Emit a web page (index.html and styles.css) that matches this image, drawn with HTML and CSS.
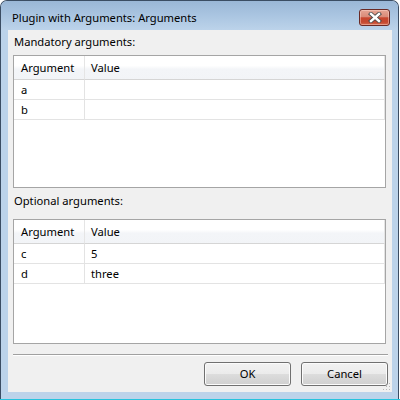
FILE: index.html
```html
<!DOCTYPE html>
<html>
<head>
<meta charset="utf-8">
<link rel="stylesheet" href="styles.css">
</head>
<body>
<div class="window">
  <div class="titlebar">
    <span class="title">Plugin with Arguments: Arguments</span>
    <div class="close">
      <svg width="14" height="11" viewBox="0 0 14 11">
        <path d="M3 2 L11 9 M11 2 L3 9" stroke="#4a4a4a" stroke-width="4.2" stroke-linecap="square" fill="none"/>
        <path d="M3 2 L11 9 M11 2 L3 9" stroke="#ffffff" stroke-width="2.4" stroke-linecap="square" fill="none"/>
      </svg>
    </div>
  </div>
  <div class="client">
    <div class="label first">Mandatory arguments:</div>
    <div class="list list1">
      <div class="row head"><div class="cell c1">Argument</div><div class="cell c2">Value</div></div>
      <div class="row"><div class="cell c1">a</div><div class="cell c2"></div></div>
      <div class="row"><div class="cell c1">b</div><div class="cell c2"></div></div>
    </div>
    <div class="label second">Optional arguments:</div>
    <div class="list list2">
      <div class="row head"><div class="cell c1">Argument</div><div class="cell c2">Value</div></div>
      <div class="row"><div class="cell c1">c</div><div class="cell c2">5</div></div>
      <div class="row"><div class="cell c1">d</div><div class="cell c2">three</div></div>
    </div>
    <div class="separator"></div>
    <div class="buttons">
      <div class="btn">OK</div>
      <div class="btn">Cancel</div>
    </div>
    <svg class="grip" width="8" height="8" viewBox="0 0 8 8">
      <rect x="6" y="0" width="1" height="1" fill="#b8b8b8"/>
      <rect x="3" y="3" width="1" height="1" fill="#b8b8b8"/>
      <rect x="6" y="3" width="1" height="1" fill="#b8b8b8"/>
      <rect x="0" y="6" width="1" height="1" fill="#b8b8b8"/>
      <rect x="3" y="6" width="1" height="1" fill="#b8b8b8"/>
      <rect x="6" y="6" width="1" height="1" fill="#b8b8b8"/>
    </svg>
  </div>
</div>
</body>
</html>
```
FILE: styles.css
```css
html, body {
  margin: 0;
  padding: 0;
}
body {
  width: 400px;
  height: 400px;
  background: linear-gradient(to bottom, #ffffff 399px, #27c3dd 399px);
  font-family: "Noto Sans", "Open Sans", sans-serif;
  font-size: 11.2px;
  color: #000;
  overflow: hidden;
}
.window {
  box-sizing: border-box;
  width: 399px;
  height: 399px;
  border: 1px solid #3b4d63;
  border-bottom: none;
  border-radius: 7px 7px 0 0;
  background: #bcd3ea;
  padding: 0 6px 7px 7px;
  display: flex;
  flex-direction: column;
}
.titlebar {
  height: 29px;
  margin: 0 -6px 0 -7px;
  padding: 0 8px 0 11px;
  border-radius: 6px 6px 0 0;
  background: linear-gradient(to bottom, #9ab7d6 0%, #aac5e1 50%, #bcd3ea 100%);
  display: flex;
  align-items: flex-start;
  justify-content: space-between;
}
.title {
  line-height: 16px;
  margin-top: 9px;
  color: #000;
}
.close {
  box-sizing: border-box;
  width: 31px;
  height: 17px;
  margin-top: 8px;
  border: 1px solid #6a2a25;
  border-radius: 3px;
  background: linear-gradient(to bottom, #e6a594 0%, #d98b79 45%, #c8462f 52%, #c4482f 80%, #d66a4e 100%);
  box-shadow: inset 0 0 0 1px rgba(255, 220, 210, 0.45);
  display: flex;
  align-items: center;
  justify-content: center;
}
.close svg {
  display: block;
}
.client {
  position: relative;
  flex: 1;
  background: #f0f0f0;
  padding: 4px 4px 0 5px;
  display: flex;
  flex-direction: column;
}
.label {
  line-height: 16px;
  height: 16px;
  padding-left: 1px;
}
.label.second {
  margin-top: 5px;
}
.list {
  box-sizing: border-box;
  width: 373px;
  background: #fff;
  border: 1px solid #a5a5a5;
}
.list1 {
  margin-top: 5px;
  height: 133px;
}
.list2 {
  margin-top: 10px;
  height: 125px;
}
.row {
  display: grid;
  grid-template-columns: 71px 300px;
  height: 20px;
}
.row.head {
  height: 24px;
  background: linear-gradient(to bottom, #ffffff 0%, #ffffff 40%, #f3f5f8 55%, #f2f4f7 100%);
}
.cell {
  box-sizing: border-box;
  border-right: 1px solid #e3e3e3;
  border-bottom: 1px solid #e3e3e3;
  line-height: 19px;
  padding-left: 7px;
  white-space: nowrap;
}
.head .cell {
  line-height: 23px;
  border-bottom-color: #d5d5d5;
  border-right-color: #e5e5e5;
}
.cell.c2 {
  padding-left: 6px;
}
.separator {
  margin-top: 10px;
  border-top: 1px solid #a0a0a0;
  border-bottom: 1px solid #ffffff;
  height: 0;
}
.buttons {
  margin-top: 6px;
  display: flex;
  justify-content: flex-end;
  gap: 10px;
}
.btn {
  box-sizing: border-box;
  width: 87px;
  height: 24px;
  border: 1px solid #707070;
  border-radius: 3px;
  background: linear-gradient(to bottom, #f2f2f2 0%, #ebebeb 50%, #dddddd 50%, #cfcfcf 100%);
  box-shadow: inset 0 0 0 1px #fbfbfb;
  text-align: center;
  line-height: 22px;
}
.grip {
  position: absolute;
  right: 1px;
  bottom: 1px;
}
```
